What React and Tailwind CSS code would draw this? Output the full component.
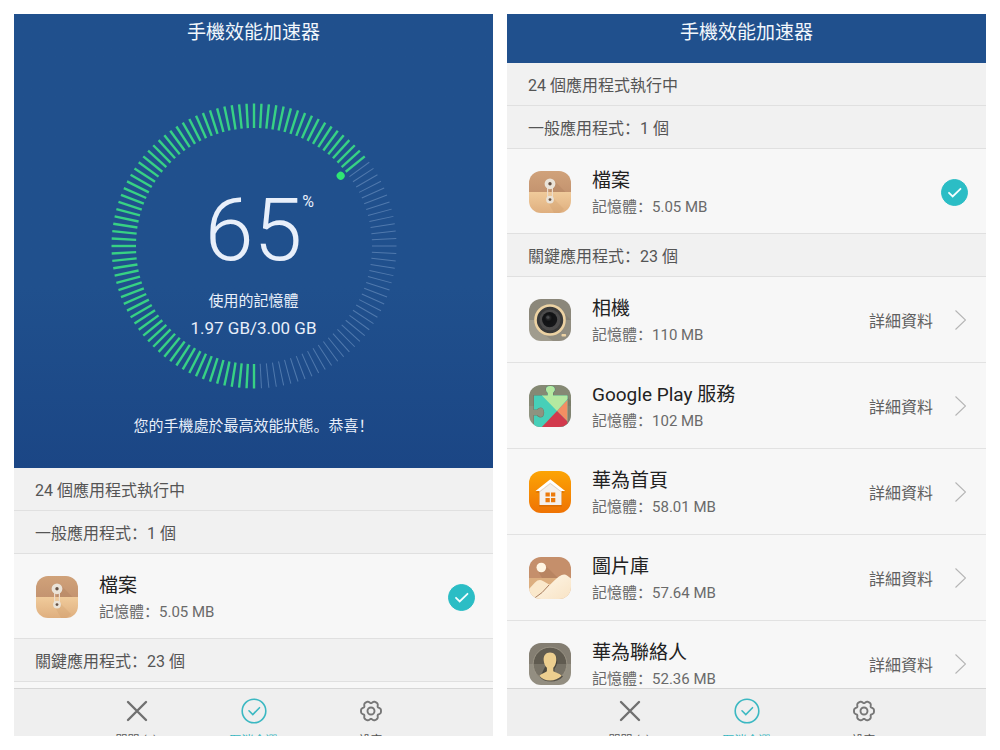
import React, { useId, useState } from "react";

const TICKS = 120;
const USED_PERCENT = 65;

const keyApps = [
  { name: "相機", memory: "110 MB", icon: "camera" },
  { name: "Google Play 服務", memory: "102 MB", icon: "play" },
  { name: "華為首頁", memory: "58.01 MB", icon: "home" },
  { name: "圖片庫", memory: "57.64 MB", icon: "gallery" },
  { name: "華為聯絡人", memory: "52.36 MB", icon: "contacts" },
];

/* ---------- App icons ---------- */

const FilesArt = ({ id }) => (
  <>
    <defs>
      <linearGradient id={`${id}-a`} x1="0" y1="0" x2="0" y2="1">
        <stop offset="0" stopColor="#d0a27a" />
        <stop offset="1" stopColor="#c49470" />
      </linearGradient>
      <linearGradient id={`${id}-b`} x1="0" y1="0" x2="0" y2="1">
        <stop offset="0" stopColor="#f0cb9b" />
        <stop offset="1" stopColor="#dfaf7f" />
      </linearGradient>
    </defs>
    <rect width="42" height="21" fill={`url(#${id}-a)`} />
    <rect y="21" width="42" height="21" fill={`url(#${id}-b)`} />
    <path d="M24.5 9 36.5 21H21V16z" fill="#a87a58" opacity=".3" />
    <path d="M23.5 26.5 35 38 31 42H25l-6-11z" fill="#c4935f" opacity=".2" />
    <path d="M18.6 13v15M23.4 13v15" stroke="#ecdccb" strokeWidth="1.2" />
    <circle cx="21" cy="12.8" r="5.4" fill="#eae3d8" />
    <circle cx="21" cy="12.8" r="1.7" fill="#665144" />
    <circle cx="21" cy="28.6" r="3.9" fill="#eae3d8" />
    <circle cx="21" cy="28.6" r="1.4" fill="#665144" />
  </>
);

const CameraArt = ({ id }) => (
  <>
    <defs>
      <radialGradient id={`${id}-a`} cx=".42" cy=".38" r=".7">
        <stop offset="0" stopColor="#3a3a3b" />
        <stop offset=".35" stopColor="#111214" />
        <stop offset="1" stopColor="#16171a" />
      </radialGradient>
    </defs>
    <rect width="42" height="21" fill="#8b877a" />
    <rect y="21" width="42" height="21" fill="#a09c8e" />
    <path d="M32 11 42 21v21H24L9 31z" fill="#6f6b60" opacity=".3" />
    <circle cx="21" cy="21" r="15.8" fill="#ecd2a3" />
    <circle cx="21" cy="21" r="13.2" fill="#393939" />
    <circle cx="21" cy="21" r="10.5" fill="#4c4b4b" />
    <circle cx="20.6" cy="20.6" r="7.6" fill={`url(#${id}-a)`} />
    <circle cx="18.8" cy="18.2" r="1.6" fill="#7b7d80" opacity=".3" />
    <rect x="32.5" y="35" width="4.6" height="2.6" rx=".8" fill="#ecd2a3" />
  </>
);

const PUZZLE =
  "M5 10.5h13.8V7.8C17.4 6.6 17 5.2 17 4.2 17 2 19 1 21.4 1s4.4 1 4.4 3.3c0 1.2-.6 2.3-1.8 3.5v2.7h14.5V42H5V30.500h2.800c1.200 1.400 2.500 2 3.800 2 2.400 0 3.600-2 3.600-5s-1.400-5-3.800-5c-1.200 0-2.500.7-3.600 2H5z";

const PlayArt = ({ id }) => (
  <>
    <defs>
      <clipPath id={`${id}-p`}>
        <path d={PUZZLE} />
      </clipPath>
    </defs>
    <rect width="42" height="21" fill="#858974" />
    <rect y="21" width="42" height="21" fill="#8f9380" />
    <path d="M38.5 12 42 16v26H30z" fill="#686b5b" opacity=".4" />
    <path d={PUZZLE} fill="none" stroke="#5f6a5c" strokeWidth="1.2" opacity=".6" />
    <g clipPath={`url(#${id}-p)`}>
      <rect width="42" height="42" fill="#47cfb8" />
      <path d="M13 10.500 28 26 42 10V0H13z" fill="#b4e9a0" />
      <path d="M28 26 42 11v29z" fill="#f48f63" />
      <path d="M28 26 11 44h31V40z" fill="#d23a4d" />
    </g>
  </>
);

const HomeArt = ({ id }) => (
  <>
    <defs>
      <linearGradient id={`${id}-a`} x1="0" y1="0" x2="0" y2="1">
        <stop offset="0" stopColor="#fca404" />
        <stop offset="1" stopColor="#ef7304" />
      </linearGradient>
    </defs>
    <rect width="42" height="42" fill={`url(#${id}-a)`} />
    <path d="M6.5 21.5 21 9.5l14.500 12-2.500.5v13.500H10V22z" fill="#c05c00" opacity=".45" />
    <path d="M10.5 20v14h22V20L21.500 11z" fill="#f4f0ec" />
    <path d="M21.300 8.300 6.500 20h4.500l10.300-8.200L31.700 20h4.500z" fill="#fff" />
    <path d="M11 20.600 21.300 12.500 32 20.600" fill="none" stroke="#d8cdc4" strokeWidth=".8" />
    <path d="M16.500 21.500h4.300v4h-4.300zM22 21.500h4.300v4H22zM16.500 27h4.300v4.300h-4.300zM22 27h4.300v4.300H22z" fill="#ec7a0b" />
  </>
);

const GalleryArt = ({ id }) => (
  <>
    <defs>
      <linearGradient id={`${id}-a`} x1="0" y1="0" x2="1" y2="1">
        <stop offset="0" stopColor="#fff8ea" />
        <stop offset="1" stopColor="#f8e3c5" />
      </linearGradient>
    </defs>
    <rect width="42" height="21" fill="#c58f6b" />
    <rect y="21" width="42" height="21" fill="#dcae7f" />
    <path d="M15.500 7.500 29 21H13L9 14z" fill="#a06f4f" opacity=".35" />
    <circle cx="12.300" cy="10.500" r="4.800" fill="#fff5e3" />
    <path d="M0 32 6 25.500q4-4 8-1.500l7 4L7 42H0z" fill="#fae8cb" />
    <path d="M5 41C14 36 24 24 30 19.500q5-3.500 8-1l4 3V42H4z" fill={`url(#${id}-a)`} />
    <path d="M5 41.500Q14 36 20 28" fill="none" stroke="#a87e60" strokeWidth="1" />
  </>
);

const ContactsArt = () => (
  <>
    <rect width="42" height="21" fill="#847e72" />
    <rect y="21" width="42" height="21" fill="#938e81" />
    <circle cx="21" cy="21" r="16.800" fill="#605b50" />
    <path d="M4.200 21h33.600a16.800 16.800 0 0 1-33.600 0z" fill="#777266" />
    <circle cx="21" cy="21" r="16.800" fill="none" stroke="#aaa493" strokeWidth=".7" />
    <path
      d="M22.500 11c4 0 6 3 5.700 7.500-.2 3.500-1.500 5.800-2.700 7.200v3.500c2.500 1.500 6.500 2 8.500 4.300C31 36.800 27 38.500 22 38.500S13 37 11 34z"
      fill="#34312b"
      opacity=".65"
    />
    <path
      d="M21 9.600c4.400 0 6.800 3 6.300 8-.3 3.400-1.500 5.700-3 7.200v3.400c2.700 1.600 6.500 2 8.400 4.600C29.500 36 25.500 37.600 21 37.600S12.500 36 10.500 32.800c2-2.600 5.700-3 7.400-4.600v-3.400c-1.700-1.500-2.900-3.800-3.200-7.200-.4-5 2-8 6.300-8z"
      fill="#ecce8f"
    />
  </>
);

const ART = {
  files: FilesArt,
  camera: CameraArt,
  play: PlayArt,
  home: HomeArt,
  gallery: GalleryArt,
  contacts: ContactsArt,
};

const AppIcon = ({ name }) => {
  const id = useId();
  const Art = ART[name];

  return (
    <svg
      viewBox="0 0 42 42"
      className="size-[42px] shrink-0 rounded-xl"
      aria-hidden="true"
    >
      <Art id={id} />
    </svg>
  );
};

/* ---------- Toolbar icons ---------- */

const CloseIcon = () => (
  <svg viewBox="0 0 26 26" className="size-[26px]" fill="none" aria-hidden="true">
    <path
      d="M4 4l18 18M22 4L4 22"
      stroke="#707070"
      strokeWidth="2.4"
      strokeLinecap="round"
    />
  </svg>
);

const SelectIcon = () => (
  <svg viewBox="0 0 26 26" className="size-[26px]" fill="none" aria-hidden="true">
    <g stroke="#3bb8c2" strokeWidth="1.6">
      <circle cx="13" cy="13" r="11.8" />
      <path d="M8 12.800l3.800 3.700 6.700-6.800" strokeLinecap="round" />
    </g>
  </svg>
);

// Six-lobed outline, one lobe every 60 degrees
const gearPoints = Array.from({ length: 120 }, (_, i) => {
  const a = (i * 3 * Math.PI) / 180;
  const r = 9.2 + 1.1 * Math.cos(6 * a) - 0.3 * Math.cos(12 * a);
  return `${(13 + r * Math.cos(a)).toFixed(2)},${(13 + r * Math.sin(a)).toFixed(2)}`;
}).join(" ");

const GearIcon = () => (
  <svg viewBox="0 0 26 26" className="size-[26px]" fill="none" aria-hidden="true">
    <g stroke="#777" strokeWidth="1.9" strokeLinejoin="round">
      <polygon points={gearPoints} />
      <circle cx="13" cy="13" r="3.5" />
    </g>
  </svg>
);

/* ---------- Building blocks ---------- */

const Title = () => (
  <h1 className="text-center text-[19px] leading-[38px] text-[#f2f7fc]">
    手機效能加速器
  </h1>
);

const Gauge = () => {
  const used = Math.round((TICKS * USED_PERCENT) / 100);

  return (
    <div className="relative mx-auto size-72">
      <svg viewBox="-144 -144 288 288" className="size-full" aria-hidden="true">
        {Array.from({ length: TICKS }, (_, i) => (
          <line
            key={i}
            y1="118"
            y2="142.5"
            transform={`rotate(${(i * 360) / TICKS})`}
            stroke={i < used ? "#37d184" : "#5079ad"}
            strokeWidth={i < used ? 2.4 : 1}
          />
        ))}
        <circle
          cy="111.5"
          r="4"
          fill="#2fe673"
          transform={`rotate(${((used - 1) * 360) / TICKS})`}
        />
      </svg>

      <div className="absolute inset-0 flex flex-col items-center pt-20 text-[#e8effa]">
        <p className="relative text-[88px] leading-[96px] font-light">
          65
          <span className="absolute top-2.5 left-full text-base leading-5 font-normal">
            %
          </span>
        </p>
        <p className="mt-2.5 text-[15px] leading-[27px]">使用的記憶體</p>
        <p className="text-[17px] leading-[27px]">1.97 GB/3.00 GB</p>
      </div>
    </div>
  );
};

const SectionRow = ({ children }) => (
  <h2 className="h-[43px] border-b border-[#e0e0e0] bg-[#f1f1f1] px-[21px] text-base leading-[46px] text-[#555]">
    {children}
  </h2>
);

const AppInfo = ({ icon, name, memory }) => (
  <>
    <AppIcon name={icon} />
    <div className="min-w-0 flex-1 pt-0.5">
      <p className="truncate text-[19px] leading-7 text-[#222]">{name}</p>
      <p className="truncate text-[15px] leading-6 text-[#6a6a6a]">
        記憶體：{memory}
      </p>
    </div>
  </>
);

const SelectableApp = () => {
  const [checked, setChecked] = useState(true);

  return (
    <label className="flex h-[85px] items-center gap-[21px] border-b border-[#e0e0e0] pt-0.5 pr-[18px] pl-[22px]">
      <AppInfo icon="files" name="檔案" memory="5.05 MB" />
      <span className="grid shrink-0 place-items-center *:col-start-1 *:row-start-1">
        <input
          type="checkbox"
          checked={checked}
          onChange={() => setChecked(!checked)}
          className="size-[27px] appearance-none rounded-full border border-[#2bbdc5] checked:bg-[#2bbdc5]"
        />
        <svg
          viewBox="0 0 27 27"
          className="pointer-events-none size-[27px]"
          fill="none"
          aria-hidden="true"
        >
          <path
            d="M8 13.800l3.700 3.700 7.800-7.700"
            stroke="#f4feff"
            strokeWidth="1.8"
            strokeLinecap="round"
          />
        </svg>
      </span>
    </label>
  );
};

const KeyApp = ({ app }) => (
  <li className="flex h-[86px] shrink-0 items-center gap-[21px] border-b border-[#e2e2e2] pr-5 pl-[22px]">
    <AppInfo icon={app.icon} name={app.name} memory={app.memory} />
    <button
      type="button"
      className="flex shrink-0 items-center gap-[22px] text-base text-[#606060]"
    >
      <span className="pt-1">詳細資料</span>
      <svg viewBox="0 0 11 20" className="h-5 w-[11px]" fill="none" aria-hidden="true">
        <path d="M.5.500l10 9.500-10 9.500" stroke="#b5b5b5" strokeWidth="1.1" />
      </svg>
    </button>
  </li>
);

const Toolbar = () => (
  <nav className="grid h-12 shrink-0 grid-cols-3 items-start overflow-hidden border-t border-[#d6d6d6] bg-[#efefef] px-16 text-xs leading-4">
    <button type="button" className="flex flex-col items-center gap-[9px] pt-[9px] text-[#555]">
      <CloseIcon />
      關閉 (1)
    </button>
    <button type="button" className="flex flex-col items-center gap-[9px] pt-[9px] text-[#3bb8c2]">
      <SelectIcon />
      取消全選
    </button>
    <button type="button" className="flex flex-col items-center gap-[9px] pt-[9px] text-[#555]">
      <GearIcon />
      設定
    </button>
  </nav>
);

const Screen = ({ header, children }) => (
  <section className="flex min-w-0 flex-1 flex-col overflow-hidden bg-[#f7f7f7]">
    {header}
    <div className="min-h-0 flex-1 overflow-hidden">{children}</div>
    <Toolbar />
  </section>
);

const App = () => (
  <main className="flex h-screen gap-3.5 bg-white p-3.5 font-['Roboto','Noto_Sans_CJK_SC',sans-serif]">
    <Screen
      header={
        <header className="shrink-0 bg-linear-to-b from-[#20508d] from-60% to-[#1b4685] pb-7">
          <Title />
          <div className="pt-[50px]">
            <Gauge />
          </div>
          <p className="pt-[22px] text-center text-[15px] leading-7 text-[#e8effa]">
            您的手機處於最高效能狀態。恭喜！
          </p>
        </header>
      }
    >
      <SectionRow>24 個應用程式執行中</SectionRow>
      <SectionRow>一般應用程式：1 個</SectionRow>
      <SelectableApp />
      <SectionRow>關鍵應用程式：23 個</SectionRow>
    </Screen>

    <Screen
      header={
        <header className="shrink-0 bg-[#20508d] pb-[11px]">
          <Title />
        </header>
      }
    >
      <SectionRow>24 個應用程式執行中</SectionRow>
      <SectionRow>一般應用程式：1 個</SectionRow>
      <SelectableApp />
      <SectionRow>關鍵應用程式：23 個</SectionRow>
      <ul>
        {keyApps.map((app) => (
          <KeyApp key={app.name} app={app} />
        ))}
      </ul>
    </Screen>
  </main>
);

export default App;
